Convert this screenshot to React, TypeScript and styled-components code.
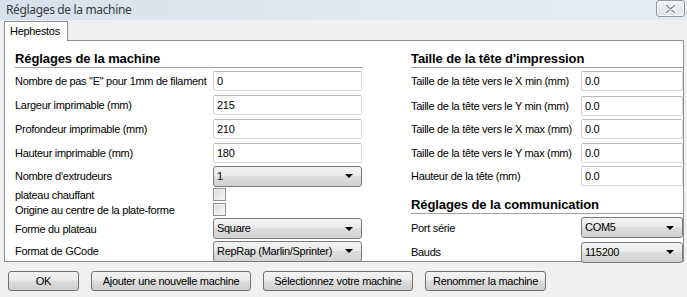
import React from "react";
import styled, { createGlobalStyle } from "styled-components";

const Global = createGlobalStyle`
  html, body { margin: 0; padding: 0; background: #f0f0f0; }
  body { font-family: "Liberation Sans", Arial, sans-serif; font-size: 11px; letter-spacing: -0.3px; color: #000; }
`;

const Window = styled.div`
  width: 687px;
  height: 297px;
  background: #f0f0f0;
  display: flex;
  flex-direction: column;
  overflow: hidden;
`;

const TitleBar = styled.div`
  height: 20px;
  display: flex;
  align-items: flex-start;
  justify-content: space-between;
  background: linear-gradient(to right, #d7e1ed, #e2e9f2 60%, #e4ebf3);
`;

const Title = styled.div`
  font-family: "Noto Sans", "Liberation Sans", sans-serif;
  font-size: 12px;
  letter-spacing: -0.35px;
  color: #3a3a3a;
  padding: 2px 0 0 6px;
  line-height: 16px;
`;

const CloseButton = styled.div`
  width: 27px;
  height: 15px;
  margin: 0 2px 0 0;
  border: 1px solid #8c99aa;
  border-radius: 3px;
  background: linear-gradient(#f1f4f8, #dde4ed);
  box-shadow: inset 0 0 0 1px #f7f9fb;
  display: flex;
  align-items: center;
  justify-content: center;
`;

const Body = styled.div`
  padding: 1px 3px 0 4px;
  display: flex;
  flex-direction: column;
`;

const TabStrip = styled.div`
  display: flex;
  height: 19px;
  position: relative;
  z-index: 1;
`;

const Tab = styled.div`
  background: #fff;
  border: 1px solid #898c95;
  border-bottom: none;
  height: 20px;
  padding: 0 0 0 5px;
  line-height: 19px;
  box-sizing: border-box;
  width: 64px;
  white-space: nowrap;
`;

const Panel = styled.div`
  background: #fff;
  border: 1px solid #898c95;
  height: 222px;
  box-sizing: border-box;
  display: grid;
  grid-template-columns: 347px 272px;
  column-gap: 49px;
  padding: 10px 0 0 10px;
`;

const Column = styled.div`
  display: flex;
  flex-direction: column;
`;

const Heading = styled.div<{ $top?: number }>`
  font-weight: bold;
  font-size: 13px;
  letter-spacing: -0.1px;
  line-height: 16px;
  border-bottom: 1px solid #a0a0a0;
  margin-top: ${(p) => p.$top ?? 0}px;
`;

const Row = styled.div<{ $h: number; $label: number }>`
  display: grid;
  grid-template-columns: ${(p) => p.$label}px 1fr;
  align-items: center;
  height: ${(p) => p.$h}px;
`;

const Label = styled.div`
  white-space: nowrap;
  line-height: 14px;
`;

const TextBox = styled.div`
  height: 20px;
  box-sizing: border-box;
  border: 1px solid #d3d6dc;
  border-top-color: #b9bcc2;
  border-radius: 2px;
  background: #fff;
  padding-left: 3px;
  line-height: 18px;
`;

const Combo = styled.div`
  height: 21px;
  box-sizing: border-box;
  border: 1px solid #7a7a7a;
  border-radius: 3px;
  background: linear-gradient(#f3f3f3 0%, #ebebeb 45%, #dddddd 50%, #d2d2d2 100%);
  padding: 0 8px 0 3px;
  display: flex;
  align-items: center;
  justify-content: space-between;
  white-space: nowrap;
  line-height: 19px;
`;

const Arrow = styled.span`
  width: 0;
  height: 0;
  border-left: 4px solid transparent;
  border-right: 4px solid transparent;
  border-top: 4px solid #000;
`;

const CheckBox = styled.div`
  width: 11px;
  height: 11px;
  border: 1px solid #8e8f8f;
  background: linear-gradient(135deg, #d8d8d8, #f6f6f6);
  box-shadow: inset 0 0 0 1px #f2f2f2;
`;

const ButtonBar = styled.div`
  display: flex;
  gap: 12px;
  padding: 9px 0 0 4px;
`;

const Button = styled.div<{ $w: number }>`
  width: ${(p) => p.$w}px;
  height: 20px;
  box-sizing: border-box;
  border: 1px solid #707070;
  border-radius: 3px;
  background: linear-gradient(#f2f2f2 0%, #ebebeb 45%, #dddddd 50%, #cfcfcf 100%);
  display: flex;
  align-items: center;
  justify-content: center;
  white-space: nowrap;
`;

const leftText: [string, string, number][] = [
  ['Nombre de pas "E" pour 1mm de filament', "0", 25],
  ["Largeur imprimable (mm)", "215", 24],
  ["Profondeur imprimable (mm)", "210", 24],
  ["Hauteur imprimable (mm)", "180", 24],
];

const rightText: [string, string, number][] = [
  ["Taille de la tête vers le X min (mm)", "0.0", 26],
  ["Taille de la tête vers le Y min (mm)", "0.0", 23],
  ["Taille de la tête vers le X max (mm)", "0.0", 24],
  ["Taille de la tête vers le Y max (mm)", "0.0", 23],
  ["Hauteur de la tête (mm)", "0.0", 24],
];

export default function App() {
  return (
    <Window>
      <Global />
      <TitleBar>
        <Title>Réglages de la machine</Title>
        <CloseButton>
          <svg width="13" height="10" viewBox="0 0 13 10">
            <path d="M2.5 1.5 L10.5 8.5 M10.5 1.5 L2.5 8.5" stroke="#fff" strokeWidth="3.4" strokeLinecap="round" />
            <path d="M2.5 1.5 L10.5 8.5 M10.5 1.5 L2.5 8.5" stroke="#7f8998" strokeWidth="1.5" strokeLinecap="round" />
          </svg>
        </CloseButton>
      </TitleBar>
      <Body>
        <TabStrip>
          <Tab>Hephestos</Tab>
        </TabStrip>
        <Panel>
          <Column>
            <Heading>Réglages de la machine</Heading>
            {leftText.map(([l, v, h]) => (
              <Row key={l} $h={h} $label={198}>
                <Label>{l}</Label>
                <TextBox>{v}</TextBox>
              </Row>
            ))}
            <Row $h={22} $label={198}>
              <Label>Nombre d'extrudeurs</Label>
              <Combo>1<Arrow /></Combo>
            </Row>
            <Row $h={15} $label={198}>
              <Label>plateau chauffant</Label>
              <CheckBox />
            </Row>
            <Row $h={15} $label={198}>
              <Label>Origine au centre de la plate-forme</Label>
              <CheckBox />
            </Row>
            <Row $h={23} $label={198}>
              <Label>Forme du plateau</Label>
              <Combo>Square<Arrow /></Combo>
            </Row>
            <Row $h={22} $label={198}>
              <Label>Format de GCode</Label>
              <Combo>RepRap (Marlin/Sprinter)<Arrow /></Combo>
            </Row>
          </Column>
          <Column>
            <Heading>Taille de la tête d'impression</Heading>
            {rightText.map(([l, v, h]) => (
              <Row key={l} $h={h} $label={170}>
                <Label>{l}</Label>
                <TextBox>{v}</TextBox>
              </Row>
            ))}
            <Heading $top={9}>Réglages de la communication</Heading>
            <Row $h={27} $label={170}>
              <Label>Port série</Label>
              <Combo>COM5<Arrow /></Combo>
            </Row>
            <Row $h={22} $label={170}>
              <Label>Bauds</Label>
              <Combo>115200<Arrow /></Combo>
            </Row>
          </Column>
        </Panel>
        <ButtonBar>
          <Button $w={71}>OK</Button>
          <Button $w={160}>Ajouter une nouvelle machine</Button>
          <Button $w={150}>Sélectionnez votre machine</Button>
          <Button $w={121}>Renommer la machine</Button>
        </ButtonBar>
      </Body>
    </Window>
  );
}
